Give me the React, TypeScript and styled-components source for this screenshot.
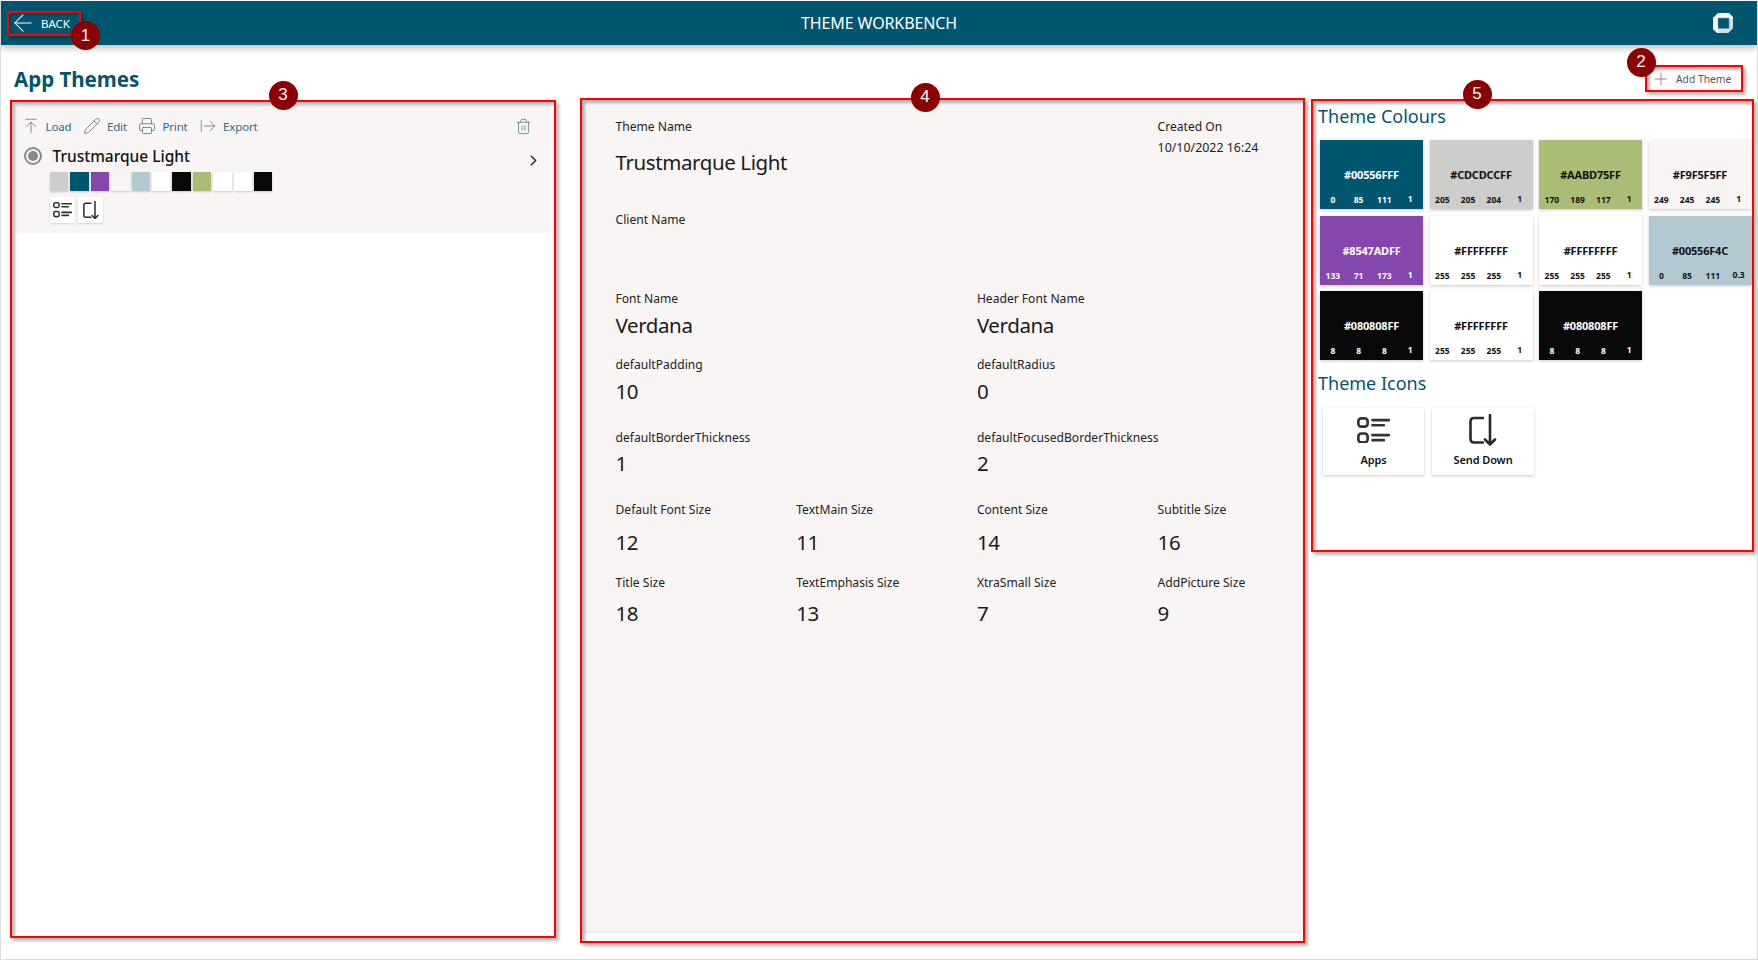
import React from "react";
import styled, { createGlobalStyle } from "styled-components";
import { ArrowLeft, ArrowRightFromLine, ArrowUpToLine, ChevronRight, Pencil, Plus, Printer, Trash2 } from "lucide-react";

const teal = "#00556f";
const sheet = "#f9f5f5";

const Global = createGlobalStyle`
  html, body { margin: 0; padding: 0; background: #fff; }
  body { font-family: "Noto Sans", "Open Sans", sans-serif; color: #1c1c1c; }
  * { box-sizing: border-box; }
`;

const Frame = styled.div`
  width: 1758px;
  height: 960px;
  border: 1px solid #dcdcdc;
  border-top-color: #fff;
  display: flex;
  flex-direction: column;
  overflow: hidden;
  background: #fff;
`;

const Header = styled.header`
  height: 44px;
  flex: none;
  background: ${teal};
  box-shadow: 0 3px 7px rgba(0, 0, 0, 0.28);
  display: flex;
  align-items: center;
  padding: 0 24px;
  color: #fff;
`;

const HeaderSide = styled.div<{ $end?: boolean }>`
  flex: 1;
  display: flex;
  justify-content: ${(p) => (p.$end ? "flex-end" : "flex-start")};
`;

const HeaderTitle = styled.div`
  font-size: 16px;
  letter-spacing: -0.1px;
  line-height: 20px;
`;

const Annotated = styled.div`
  position: relative;
  border: 2px solid #f00;
  box-shadow: 3px 3px 3px rgba(0, 0, 0, 0.28);
  &::after {
    content: "";
    position: absolute;
    inset: 0;
    pointer-events: none;
    box-shadow: inset 3px 3px 3px rgba(0, 0, 0, 0.28);
  }
`;

const BackButton = styled(Annotated)`
  width: 74px;
  height: 25px;
  margin-left: -18px;
  display: flex;
  align-items: center;
  gap: 4px;
  font-size: 11.5px;
  color: #fff;
  &::after { box-shadow: inset 2px 2px 3px rgba(0, 0, 0, 0.2); }
`;

const Badge = styled.div<{ $left: number; $top: number }>`
  position: absolute;
  left: ${(p) => p.$left}px;
  top: ${(p) => p.$top}px;
  width: 29px;
  height: 29px;
  border-radius: 50%;
  background: #8b0000;
  color: #fff;
  font-family: "Liberation Sans", sans-serif;
  font-size: 17px;
  display: flex;
  align-items: center;
  justify-content: center;
  z-index: 5;
`;

const TitleRow = styled.div`
  height: 53px;
  flex: none;
  display: flex;
  align-items: flex-end;
  justify-content: space-between;
  padding: 0 14px 6px 13px;
`;

const PageTitle = styled.h1`
  margin: 0;
  font-size: 20.5px;
  line-height: 28px;
  font-weight: 700;
  color: ${teal};
  transform: translateY(1px);
`;

const AddButton = styled(Annotated)`
  width: 98px;
  height: 27px;
  display: flex;
  align-items: center;
  padding-left: 4px;
  gap: 5px;
  font-size: 10.3px;
  color: #555;
`;

const Columns = styled.div`
  flex: 1;
  display: flex;
  align-items: flex-start;
  padding-left: 9px;
`;

const LeftPanel = styled(Annotated)`
  width: 546px;
  height: 838px;
  margin-top: 2px;
  padding: 3px;
`;

const ThemeCard = styled.div`
  height: 128px;
  background: ${sheet};
  border-radius: 3px;
  padding-top: 11px;
`;

const Toolbar = styled.div`
  height: 20px;
  display: flex;
  align-items: center;
  padding: 0 19px 0 6.5px;
  font-size: 11.5px;
  letter-spacing: -0.15px;
`;

const ToolItem = styled.div`
  display: flex;
  align-items: center;
  gap: 6px;
  margin-right: 11.5px;
  color: #2b6a80;
  svg { color: #4a6d7a; flex: none; }
`;

const ToolSpacer = styled.div`
  flex: 1;
`;

const NameRow = styled.div`
  display: flex;
  align-items: center;
  height: 22px;
  margin-top: 9px;
  padding: 0 9px 0 8.5px;
  gap: 11px;
`;

const Radio = styled.div`
  width: 18px;
  height: 18px;
  border-radius: 50%;
  border: 2px solid #8a8a8a;
  display: flex;
  align-items: center;
  justify-content: center;
  flex: none;
  &::before {
    content: "";
    width: 10px;
    height: 10px;
    border-radius: 50%;
    background: #8a8a8a;
  }
`;

const ThemeTitle = styled.div`
  flex: 1;
  font-size: 15.5px;
  font-weight: 500;
  line-height: 22px;
  color: #111;
`;

const Swatches = styled.div`
  display: flex;
  gap: 2px;
  margin: 5px 0 0 35px;
`;

const Swatch = styled.div<{ $c: string }>`
  width: 18.4px;
  height: 19px;
  background: ${(p) => p.$c};
  box-shadow: 0 1px 2px rgba(0, 0, 0, 0.18);
`;

const MiniIcons = styled.div`
  display: flex;
  gap: 3px;
  margin: 6px 0 0 35px;
`;

const MiniIcon = styled.div`
  width: 25px;
  height: 26px;
  background: #fff;
  box-shadow: 0 1px 2px rgba(0, 0, 0, 0.15);
  display: flex;
  align-items: center;
  justify-content: center;
`;

const CenterPanel = styled(Annotated)`
  width: 725px;
  height: 845px;
  margin-left: 24px;
`;

const DetailSheet = styled.div`
  height: 831px;
  background: ${sheet};
  padding: 18px 0 0 33.5px;
  box-shadow: 0 1px 3px rgba(0, 0, 0, 0.12);
`;

const Row = styled.div<{ $top?: number; $min?: number }>`
  display: grid;
  grid-template-columns: repeat(4, 180.7px);
  margin-top: ${(p) => p.$top ?? 0}px;
  min-height: ${(p) => p.$min ?? 0}px;
`;

const Field = styled.div<{ $span?: number }>`
  grid-column: span ${(p) => p.$span ?? 1};
`;

const Label = styled.div`
  font-size: 12.1px;
  line-height: 18px;
  white-space: nowrap;
  color: #222;
`;

const Value = styled.div<{ $gap?: number }>`
  font-size: 20.5px;
  letter-spacing: -0.4px;
  line-height: 28px;
  margin-top: ${(p) => p.$gap ?? 3}px;
  color: #1a1a1a;
`;

const SmallValue = styled.div`
  font-size: 12.4px;
  line-height: 18px;
  margin-top: 3px;
  white-space: nowrap;
  color: #222;
`;

const RightPanel = styled(Annotated)`
  width: 443px;
  height: 453px;
  margin: 1px 0 0 6px;
  padding-top: 2px;
`;

const SectionTitle = styled.h2<{ $top?: number }>`
  margin: ${(p) => p.$top ?? 0}px 0 0 5px;
  font-size: 18px;
  line-height: 26px;
  font-weight: 400;
  color: ${teal};
`;

const ColourGrid = styled.div`
  display: grid;
  grid-template-columns: repeat(4, 103px);
  grid-auto-rows: 69px;
  column-gap: 6.5px;
  row-gap: 6.5px;
  margin: 11px 0 0 7px;
`;

const ColourCard = styled.div<{ $bg: string; $fg: string }>`
  background: ${(p) => p.$bg};
  color: ${(p) => p.$fg};
  box-shadow: 0 1px 3px rgba(0, 0, 0, 0.22);
  padding-top: 27px;
  font-weight: 700;
  text-align: center;
`;

const Hex = styled.div`
  font-size: 11px;
  line-height: 16px;
  letter-spacing: -0.2px;
`;

const Channels = styled.div`
  display: grid;
  grid-template-columns: repeat(4, 1fr);
  margin-top: 11px;
  font-size: 8.5px;
  line-height: 12px;
`;

const Channel = styled.span`
  &:last-child { transform: translateY(-1px); }
`;

const IconGrid = styled.div`
  display: flex;
  gap: 8px;
  margin: 12px 0 0 10px;
`;

const IconCard = styled.div<{ $w: number }>`
  width: ${(p) => p.$w}px;
  height: 67px;
  background: #fff;
  box-shadow: 0 1px 3px rgba(0, 0, 0, 0.2);
  display: flex;
  flex-direction: column;
  align-items: center;
`;

const IconArt = styled.div`
  height: 44px;
  display: flex;
  align-items: center;
  justify-content: center;
`;

const IconLabel = styled.div`
  font-size: 11px;
  letter-spacing: -0.1px;
  line-height: 16px;
  font-weight: 600;
  color: #111;
`;

const AppsIcon = ({ w }: { w: number }) => (
  <svg width={w} height={(w * 26) / 32} viewBox="0 0 32 26" fill="none" stroke="#333" strokeWidth="2.6" strokeLinecap="round">
    <rect x="1.3" y="1.3" width="9" height="8" rx="2.8" />
    <rect x="1.3" y="16" width="9" height="8.6" rx="2.8" />
    <path d="M15 3H31M15 8H26M15 17.5H31M15 22.5H26" />
  </svg>
);

const SendDownIcon = ({ w }: { w: number }) => (
  <svg width={w} height={(w * 32) / 28} viewBox="0 0 28 32" fill="none" stroke="#2a2a2a" strokeWidth="2.6" strokeLinecap="round" strokeLinejoin="round">
    <path d="M14 4H5Q1.5 4 1.5 7.5V25Q1.5 28.5 5 28.5H14" />
    <path d="M21 1V30.5M16 25.5L21 30.5L26 25.5" />
  </svg>
);

const Logo = () => (
  <svg width="20" height="20" viewBox="0 0 20 20">
    <path d="M5 0H16L20 4V15L15 20H4L0 16V5Z" fill="#fff" />
    <path d="M20 6L16 5V16H5L6 20H15L20 15Z" fill="#cfe0e5" />
    <rect x="5" y="5" width="11" height="10.5" fill={teal} stroke="#6f9fae" strokeWidth="0.6" />
  </svg>
);

const colours = [
  ["#00556FFF", "#00556f", "#fff", "0", "85", "111", "1"],
  ["#CDCDCCFF", "#cdcdcc", "#111", "205", "205", "204", "1"],
  ["#AABD75FF", "#aabd75", "#111", "170", "189", "117", "1"],
  ["#F9F5F5FF", "#f9f5f5", "#111", "249", "245", "245", "1"],
  ["#8547ADFF", "#8547ad", "#fff", "133", "71", "173", "1"],
  ["#FFFFFFFF", "#ffffff", "#111", "255", "255", "255", "1"],
  ["#FFFFFFFF", "#ffffff", "#111", "255", "255", "255", "1"],
  ["#00556F4C", "#b2c9d2", "#111", "0", "85", "111", "0.3"],
  ["#080808FF", "#080808", "#fff", "8", "8", "8", "1"],
  ["#FFFFFFFF", "#ffffff", "#111", "255", "255", "255", "1"],
  ["#080808FF", "#080808", "#fff", "8", "8", "8", "1"],
];

const swatches = ["#cdcdcc", "#00556f", "#8547ad", "#f9f5f5", "#b2c9d2", "#ffffff", "#080808", "#aabd75", "#ffffff", "#ffffff", "#080808"];

export default function App() {
  return (
    <Frame>
      <Global />
      <Header>
        <HeaderSide>
          <BackButton>
            <ArrowLeft size={28} strokeWidth={0.9} color="#fff" />
            <span>BACK</span>
            <Badge $left={62} $top={8.5}>1</Badge>
          </BackButton>
        </HeaderSide>
        <HeaderTitle>THEME WORKBENCH</HeaderTitle>
        <HeaderSide $end>
          <Logo />
        </HeaderSide>
      </Header>
      <TitleRow>
        <PageTitle>App Themes</PageTitle>
        <AddButton>
          <Plus size={20} strokeWidth={1} color="#777" />
          <span>Add Theme</span>
          <Badge $left={-20.5} $top={-19.5}>2</Badge>
        </AddButton>
      </TitleRow>
      <Columns>
        <LeftPanel>
          <Badge $left={256.5} $top={-21.5}>3</Badge>
          <ThemeCard>
            <Toolbar>
              <ToolItem><ArrowUpToLine size={18} strokeWidth={1} /><span>Load</span></ToolItem>
              <ToolItem><Pencil size={18} strokeWidth={1} /><span>Edit</span></ToolItem>
              <ToolItem><Printer size={18} strokeWidth={1} /><span>Print</span></ToolItem>
              <ToolItem><ArrowRightFromLine size={18} strokeWidth={1} /><span>Export</span></ToolItem>
              <ToolSpacer />
              <Trash2 size={17} strokeWidth={1} color="#4a6d7a" />
            </Toolbar>
            <NameRow>
              <Radio />
              <ThemeTitle>Trustmarque Light</ThemeTitle>
              <ChevronRight size={17} strokeWidth={2.4} color="#333" style={{ transform: "translateY(4px)" }} />
            </NameRow>
            <Swatches>
              {swatches.map((c, i) => <Swatch key={i} $c={c} />)}
            </Swatches>
            <MiniIcons>
              <MiniIcon><AppsIcon w={19} /></MiniIcon>
              <MiniIcon><SendDownIcon w={16} /></MiniIcon>
            </MiniIcons>
          </ThemeCard>
        </LeftPanel>

        <CenterPanel>
          <Badge $left={328.5} $top={-17.5}>4</Badge>
          <DetailSheet>
            <Row>
              <Field $span={3}>
                <Label>Theme Name</Label>
                <Value $gap={12}>Trustmarque Light</Value>
              </Field>
              <Field>
                <Label>Created On</Label>
                <SmallValue>10/10/2022 16:24</SmallValue>
              </Field>
            </Row>
            <Row $top={35} $min={79}>
              <Field $span={4}><Label>Client Name</Label></Field>
            </Row>
            <Row>
              <Field $span={2}><Label>Font Name</Label><Value>Verdana</Value></Field>
              <Field $span={2}><Label>Header Font Name</Label><Value>Verdana</Value></Field>
            </Row>
            <Row $top={17}>
              <Field $span={2}><Label>defaultPadding</Label><Value>10</Value></Field>
              <Field $span={2}><Label>defaultRadius</Label><Value>0</Value></Field>
            </Row>
            <Row $top={24}>
              <Field $span={2}><Label>defaultBorderThickness</Label><Value $gap={2}>1</Value></Field>
              <Field $span={2}><Label>defaultFocusedBorderThickness</Label><Value $gap={2}>2</Value></Field>
            </Row>
            <Row $top={24}>
              <Field><Label>Default Font Size</Label><Value $gap={9}>12</Value></Field>
              <Field><Label>TextMain Size</Label><Value $gap={9}>11</Value></Field>
              <Field><Label>Content Size</Label><Value $gap={9}>14</Value></Field>
              <Field><Label>Subtitle Size</Label><Value $gap={9}>16</Value></Field>
            </Row>
            <Row $top={18}>
              <Field><Label>Title Size</Label><Value $gap={7}>18</Value></Field>
              <Field><Label>TextEmphasis Size</Label><Value $gap={7}>13</Value></Field>
              <Field><Label>XtraSmall Size</Label><Value $gap={7}>7</Value></Field>
              <Field><Label>AddPicture Size</Label><Value $gap={7}>9</Value></Field>
            </Row>
          </DetailSheet>
        </CenterPanel>

        <RightPanel>
          <Badge $left={149.5} $top={-21.5}>5</Badge>
          <SectionTitle>Theme Colours</SectionTitle>
          <ColourGrid>
            {colours.map(([hex, bg, fg, r, g, b, a], i) => (
              <ColourCard key={i} $bg={bg} $fg={fg}>
                <Hex>{hex}</Hex>
                <Channels>
                  <Channel>{r}</Channel><Channel>{g}</Channel><Channel>{b}</Channel><Channel>{a}</Channel>
                </Channels>
              </ColourCard>
            ))}
          </ColourGrid>
          <SectionTitle $top={10}>Theme Icons</SectionTitle>
          <IconGrid>
            <IconCard $w={101}>
              <IconArt><AppsIcon w={33} /></IconArt>
              <IconLabel>Apps</IconLabel>
            </IconCard>
            <IconCard $w={102}>
              <IconArt><SendDownIcon w={28} /></IconArt>
              <IconLabel>Send Down</IconLabel>
            </IconCard>
          </IconGrid>
        </RightPanel>
      </Columns>
    </Frame>
  );
}
